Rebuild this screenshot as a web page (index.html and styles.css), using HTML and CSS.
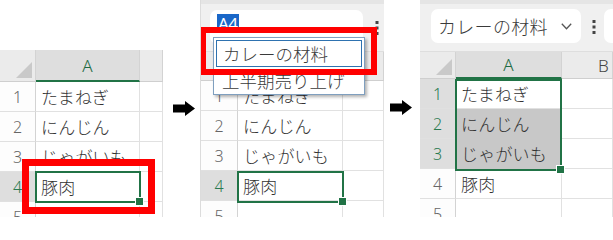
FILE: index.html
```html
<!DOCTYPE html>
<html lang="ja">
<head>
<meta charset="utf-8">
<title>名前ボックスで範囲を選択</title>
<link rel="stylesheet" href="styles.css">
</head>
<body>
<div class="canvas">
  <section class="panel p1">
    <div class="sheet">
      <div class="corner"><span class="tri"></span></div>
      <div class="ch sel">A</div>
      <div class="ch"></div>
      <div class="rh">1</div><div class="cell">たまねぎ</div><div class="cell"></div>
      <div class="rh">2</div><div class="cell">にんじん</div><div class="cell"></div>
      <div class="rh">3</div><div class="cell">じゃがいも</div><div class="cell"></div>
      <div class="rh sel">4</div><div class="cell">豚肉</div><div class="cell"></div>
      <div class="rh">5</div><div class="cell"></div><div class="cell"></div>
      <div class="selbox sb1"></div>
    </div>
    <div class="redbox rb1"></div>
  </section>

  <div class="arrow a1"><svg width="22" height="15" viewBox="0 0 22 15"><path d="M0 3.5H12V0L22 7.5L12 15V11.5H0Z" fill="#000"/></svg></div>

  <section class="panel p2">
    <div class="toolbar">
      <div class="namebox nb2"><span class="hl">A4</span></div>
      <div class="dots"><svg width="4" height="14" viewBox="0 0 4 14"><rect x="0.5" y="0" width="3" height="3" fill="#444"/><rect x="0.5" y="5.5" width="3" height="3" fill="#444"/><rect x="0.5" y="11" width="3" height="3" fill="#444"/></svg></div>
    </div>
    <div class="sheet">
      <div class="corner"><span class="tri"></span></div>
      <div class="ch sel">A</div>
      <div class="ch"></div>
      <div class="rh">1</div><div class="cell">たまねぎ</div><div class="cell"></div>
      <div class="rh">2</div><div class="cell">にんじん</div><div class="cell"></div>
      <div class="rh">3</div><div class="cell">じゃがいも</div><div class="cell"></div>
      <div class="rh sel">4</div><div class="cell">豚肉</div><div class="cell"></div>
      <div class="rh">5</div><div class="cell"></div><div class="cell"></div>
      <div class="selbox sb2"></div>
    </div>
    <ul class="dropdown">
      <li class="item focus">カレーの材料</li>
      <li class="item">上半期売り上げ</li>
    </ul>
    <div class="redbox rb2"></div>
  </section>

  <div class="arrow a2"><svg width="22" height="15" viewBox="0 0 22 15"><path d="M0 3.5H12V0L22 7.5L12 15V11.5H0Z" fill="#000"/></svg></div>

  <section class="panel p3">
    <div class="toolbar">
      <div class="namebox nb3">
        <span class="nbtext">カレーの材料</span>
        <svg class="chev" width="11" height="7" viewBox="0 0 11 7"><path d="M0.8 0.8L5.5 5.8L10.2 0.8" fill="none" stroke="#555" stroke-width="1.3"/></svg>
      </div>
      <div class="dots"><svg width="4" height="14" viewBox="0 0 4 14"><rect x="0.5" y="0" width="3" height="3" fill="#444"/><rect x="0.5" y="5.5" width="3" height="3" fill="#444"/><rect x="0.5" y="11" width="3" height="3" fill="#444"/></svg></div>
      <div class="fxbox"></div>
    </div>
    <div class="sheet">
      <div class="corner"><span class="tri"></span></div>
      <div class="ch sel">A</div>
      <div class="ch colb">B</div>
      <div class="rh sel">1</div><div class="cell">たまねぎ</div><div class="cell"></div>
      <div class="rh sel">2</div><div class="cell shade">にんじん</div><div class="cell"></div>
      <div class="rh sel">3</div><div class="cell shade">じゃがいも</div><div class="cell"></div>
      <div class="rh">4</div><div class="cell">豚肉</div><div class="cell"></div>
      <div class="rh">5</div><div class="cell"></div><div class="cell"></div>
      <div class="selbox sb3"></div>
    </div>
  </section>
</div>
</body>
</html>
```

FILE: styles.css
```css
* { box-sizing: border-box; }
html, body { margin: 0; padding: 0; background: #fff; }
body {
  width: 613px;
  height: 217px;
  overflow: hidden;
  font-family: "Noto Sans CJK JP", "Noto Sans", sans-serif;
  color: #222;
}
.canvas {
  display: flex;
  align-items: flex-start;
  width: 613px;
  height: 217px;
  overflow: hidden;
}
.panel {
  position: relative;
  height: 217px;
  overflow: hidden;
  flex: none;
}
.p1 { width: 163px; padding-top: 50px; }
.p2 { width: 184px; background: #f0f0f0; border-left: 1px solid #dcdcdc; }
.p3 { width: 193px; background: #f0f0f0; }

.arrow { flex: none; width: 22px; height: 15px; display: flex; }
.a1 { margin: 101px 5px 0 10px; }
.a2 { margin: 100px 8px 0 6px; }

/* toolbar */
.toolbar {
  height: 52px;
  display: flex;
  align-items: flex-start;
  border-top: 4px solid #e5e5e5;
  border-bottom: 1px solid #dedede;
}
.p2 .toolbar { padding: 6px 0 0 9px; }
.p3 .toolbar { padding: 5px 0 0 11px; }
.namebox {
  background: #fff;
  border-radius: 7px;
  height: 34px;
  display: flex;
  align-items: center;
  flex: none;
}
.nb2 { width: 153px; padding-left: 7px; align-items: flex-start; padding-top: 4px; }
.nb3 { width: 150px; padding-left: 7px; }
.hl {
  background: #1a67c8;
  color: #fff;
  font-family: "Noto Sans", "Liberation Sans", sans-serif;
  font-size: 17px;
  line-height: 19px;
  padding: 0 1px;
  letter-spacing: -0.5px;
}
.nbtext {
  font-size: 18px;
  font-weight: 300;
  color: #3a3a3a;
  line-height: 1;
  letter-spacing: 0.3px;
}
.chev { margin-left: auto; margin-right: 9px; margin-top: 1px; }
.dots { flex: none; display: flex; padding-top: 11px; }
.p2 .dots { margin-left: 12px; }
.p3 .dots { margin-left: 11px; }
.fxbox {
  flex: 1;
  margin-left: 8px;
  height: 34px;
  background: #fff;
  border-radius: 7px 0 0 7px;
}

/* sheet grid */
.sheet {
  position: relative;
  display: grid;
  grid-auto-rows: 30px;
  background: #fff;
}
.p1 .sheet { grid-template-columns: 36px 104px 23px; grid-template-rows: 32px; }
.p2 .sheet { grid-template-columns: 37px 105px 41px; grid-template-rows: 29px; }
.p3 .sheet { grid-template-columns: 36px 106px 51px; grid-template-rows: 27px; }

.corner, .ch {
  background: #ebebeb;
  border-right: 1px solid #d3d3d3;
  border-bottom: 1px solid #cfcfcf;
}
.corner {
  display: flex;
  align-items: flex-end;
  justify-content: flex-end;
  padding: 0 3px 3px 0;
}
.tri {
  width: 16px;
  height: 16px;
  background: #c9c9c9;
  clip-path: polygon(100% 0, 100% 100%, 0 100%);
}
.ch {
  display: flex;
  align-items: center;
  justify-content: center;
  font-family: "Noto Sans", "Liberation Sans", sans-serif;
  font-size: 17px;
  font-weight: 300;
  color: #444;
}
.ch.sel {
  background: #dedede;
  color: #1e6b43;
  border-bottom: 2px solid #217346;
}
.colb { justify-content: flex-start; padding-left: 36px; color: #444; }
.rh {
  background: #fdfdfd;
  border-right: 1px solid #d3d3d3;
  border-bottom: 1px solid #e0e0e0;
  display: flex;
  align-items: center;
  justify-content: center;
  font-family: "Noto Sans", "Liberation Sans", sans-serif;
  font-size: 16px;
  font-weight: 300;
  color: #666;
}
.rh.sel { background: #dedede; color: #2a7a50; }
.cell {
  border-right: 1px solid #e1e1e1;
  border-bottom: 1px solid #e1e1e1;
  display: flex;
  align-items: center;
  padding-left: 5px;
  font-size: 17px;
  font-weight: 300;
  color: #333;
  white-space: nowrap;
  letter-spacing: 0.2px;
}
.cell.shade { background: #c8c8c8; border-bottom-color: #c8c8c8; }

.selbox {
  position: absolute;
  border: 2px solid #217346;
  pointer-events: none;
}
.selbox::after {
  content: "";
  position: absolute;
  right: -5px;
  bottom: -5px;
  width: 7px;
  height: 7px;
  background: #217346;
  border: 1px solid #fff;
}
.sb1 { left: 35px; top: 121px; width: 106px; height: 32px; }
.sb2 { left: 36px; top: 119px; width: 107px; height: 32px; }
.sb3 { left: 35px; top: 27px; width: 107px; height: 92px; }

/* dropdown list */
.dropdown {
  position: absolute;
  left: 12px;
  top: 37px;
  width: 152px;
  height: 58px;
  margin: 0;
  padding: 2px;
  list-style: none;
  background: #fff;
  border: 1px solid #7f9fbf;
  box-shadow: 2px 2px 3px rgba(0, 0, 0, 0.3);
}
.item {
  height: 27px;
  display: flex;
  align-items: center;
  padding-left: 6px;
  font-size: 17.5px;
  font-weight: 300;
  color: #3a3a3a;
  white-space: nowrap;
}
.item.focus { border: 1.5px solid #2e72b0; }

/* red highlight frames */
.redbox {
  position: absolute;
  border-style: solid;
  border-color: #ff0000;
  pointer-events: none;
}
.rb1 { left: 22px; top: 159px; width: 133px; height: 55px; border-width: 7px; }
.rb2 { left: -1px; top: 27px; width: 177px; height: 48px; border-width: 6px; }
```
